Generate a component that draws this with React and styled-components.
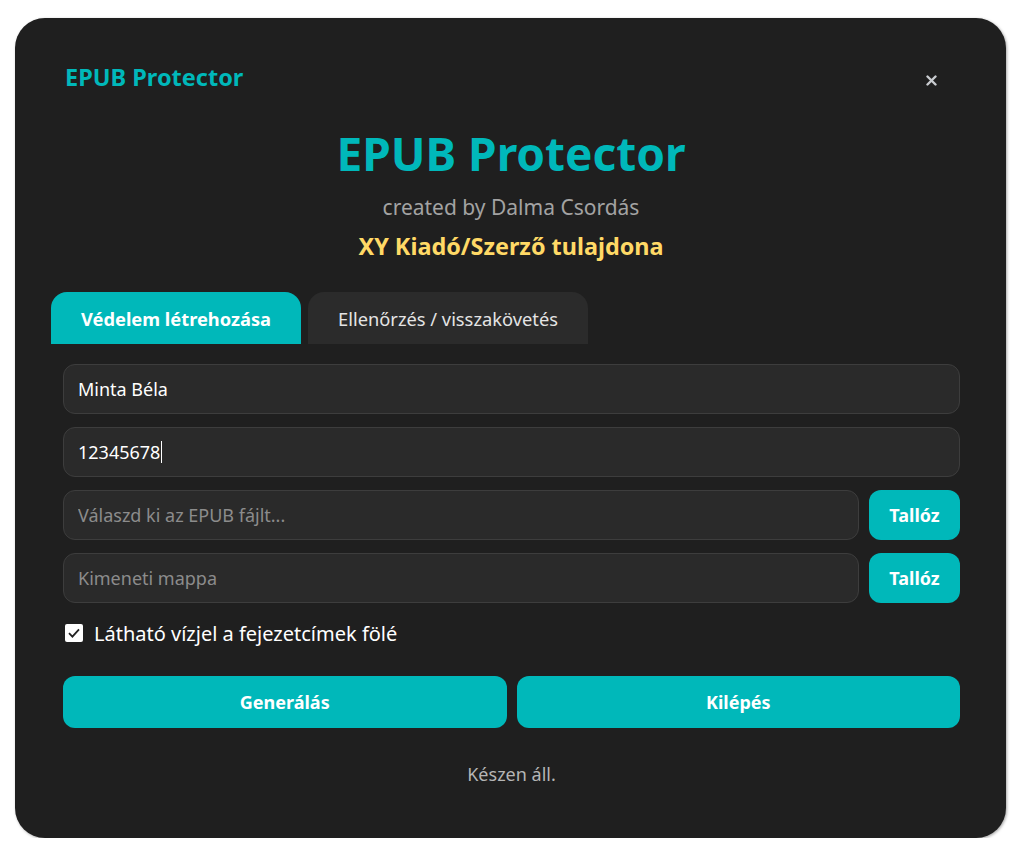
import React from "react";
import styled, { createGlobalStyle, css } from "styled-components";

const GlobalStyle = createGlobalStyle`
  body {
    margin: 0;
    background: #ffffff;
    font-family: "Noto Sans", "Open Sans", sans-serif;
  }
`;

function App() {
  return (
    <>
      <GlobalStyle />
      <Window>
        <Header>
          <SmallTitle>EPUB Protector</SmallTitle>
          <CloseButton aria-label="close">
            <svg width="11" height="11" viewBox="0 0 11 11">
              <path d="M1.5 1.5 L9.5 9.5 M9.5 1.5 L1.5 9.5" stroke="#c9ccd0" strokeWidth="2.4" strokeLinecap="round" />
            </svg>
          </CloseButton>
        </Header>

        <Hero>
          <BigTitle>EPUB Protector</BigTitle>
          <Subtitle>created by Dalma Csordás</Subtitle>
          <Owner>XY Kiadó/Szerző tulajdona</Owner>
        </Hero>

        <Tabs>
          <Tab active>Védelem létrehozása</Tab>
          <Tab>Ellenőrzés / visszakövetés</Tab>
        </Tabs>

        <Panel>
          <Field defaultValue="Minta Béla" />
          <ActiveField>
            12345678<Caret />
          </ActiveField>
          <Row>
            <Field placeholder="Válaszd ki az EPUB fájlt..." />
            <BrowseButton>Tallóz</BrowseButton>
          </Row>
          <Row>
            <Field placeholder="Kimeneti mappa" />
            <BrowseButton>Tallóz</BrowseButton>
          </Row>
          <CheckRow>
            <CheckBox>
              <svg width="14" height="14" viewBox="0 0 14 14">
                <path d="M2 7.2 L5.4 10.6 L12 3.4" fill="none" stroke="#222" strokeWidth="1.8" />
              </svg>
            </CheckBox>
            Látható vízjel a fejezetcímek fölé
          </CheckRow>
          <Actions>
            <ActionButton>Generálás</ActionButton>
            <ActionButton>Kilépés</ActionButton>
          </Actions>
          <Status>Készen áll.</Status>
        </Panel>
      </Window>
    </>
  );
}

export default App;

const Window = styled.div`
  margin: 18px 0 0 15px;
  width: 991px;
  height: 820px;
  box-sizing: border-box;
  background: #1f1f1f;
  border-radius: 30px;
  box-shadow: 1px 1px 3px rgba(0, 0, 0, 0.35);
  padding: 45px 35px 0 36px;
  color: #ffffff;
`;

const Header = styled.div`
  display: flex;
  align-items: center;
  justify-content: space-between;
  padding: 0 34px 0 14px;
  height: 28px;
`;

const SmallTitle = styled.div`
  font-size: 23.5px;
  line-height: 28px;
  font-weight: 700;
  color: #00b8ba;
`;

const CloseButton = styled.div`
  display: flex;
  align-items: center;
  justify-content: center;
  margin-top: 6px;
`;

const Hero = styled.div`
  display: flex;
  flex-direction: column;
  align-items: center;
  margin-top: 36px;
`;

const BigTitle = styled.div`
  font-size: 46px;
  line-height: 52px;
  font-weight: 700;
  color: #00b8ba;
`;

const Subtitle = styled.div`
  margin-top: 15px;
  font-size: 21px;
  line-height: 26px;
  color: #a3a3a3;
`;

const Owner = styled.div`
  margin-top: 12px;
  font-size: 23.4px;
  line-height: 28px;
  font-weight: 700;
  color: #ffd966;
`;

const Tabs = styled.div`
  display: flex;
  gap: 7px;
  margin-top: 32px;
`;

const Tab = styled.div`
  height: 52px;
  padding: 0 30px;
  display: flex;
  align-items: center;
  border-radius: 16px 16px 0 0;
  font-size: 18.3px;
  font-weight: ${(p) => (p.active ? 700 : 400)};
  background: ${(p) => (p.active ? "#00b8ba" : "#2b2b2b")};
  color: ${(p) => (p.active ? "#ffffff" : "#e4e4e4")};
`;

const Panel = styled.div`
  display: flex;
  flex-direction: column;
  gap: 13px;
  padding: 20px 11px 0 12px;
`;

const fieldBase = css`
  flex: 1 1 auto;
  min-width: 0;
  height: 50px;
  box-sizing: border-box;
  background: #2a2a2a;
  border: 1px solid #3d3d3d;
  border-radius: 12px;
  padding: 0 14px;
  font-family: "Noto Sans", "Open Sans", sans-serif;
  font-size: 18px;
  color: #ffffff;
`;

const Field = styled.input`
  ${fieldBase}
  outline: none;
  &::placeholder {
    color: #8c8c8c;
  }
`;

const ActiveField = styled.div`
  ${fieldBase}
  display: flex;
  align-items: center;
`;

const Caret = styled.span`
  width: 1px;
  height: 22px;
  margin-left: 1px;
  background: #ffffff;
`;

const Row = styled.div`
  display: flex;
  gap: 10px;
`;

const BrowseButton = styled.button`
  flex: none;
  width: 91px;
  height: 50px;
  border: none;
  border-radius: 12px;
  background: #00b8ba;
  color: #ffffff;
  font-family: "Noto Sans", "Open Sans", sans-serif;
  font-size: 18px;
  font-weight: 700;
`;

const CheckRow = styled.label`
  display: flex;
  align-items: center;
  gap: 11px;
  height: 28px;
  margin: 3px 0 0 2px;
  font-size: 20px;
  color: #ffffff;
`;

const CheckBox = styled.span`
  width: 18px;
  height: 18px;
  border-radius: 2px;
  background: #ffffff;
  display: flex;
  align-items: center;
  justify-content: center;
`;

const Actions = styled.div`
  display: flex;
  gap: 10px;
  margin-top: 16px;
`;

const ActionButton = styled.button`
  flex: 1;
  height: 52px;
  border: none;
  border-radius: 12px;
  background: #00b8ba;
  color: #ffffff;
  font-family: "Noto Sans", "Open Sans", sans-serif;
  font-size: 18px;
  font-weight: 700;
`;

const Status = styled.div`
  margin-top: 20px;
  line-height: 26px;
  text-align: center;
  font-size: 18px;
  color: #b5b5b5;
`;
